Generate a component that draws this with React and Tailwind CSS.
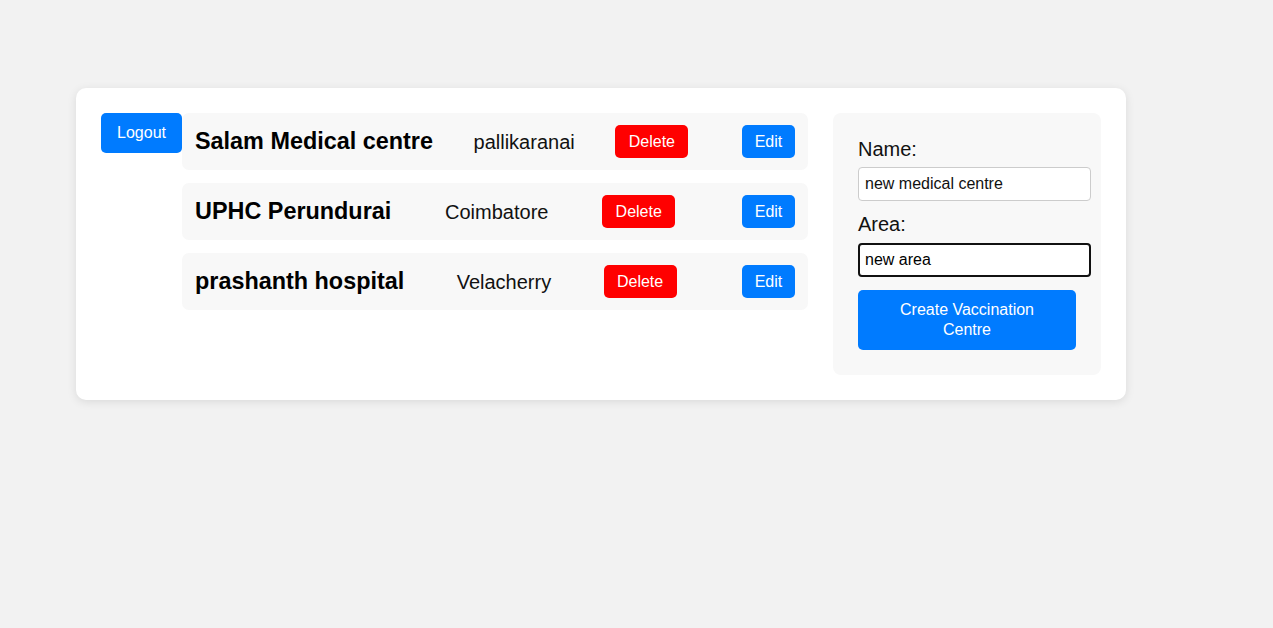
import { useState } from 'react';

const centres = [
  { id: 1, name: 'Salam Medical centre', area: 'pallikaranai' },
  { id: 2, name: 'UPHC Perundurai', area: 'Coimbatore' },
  { id: 3, name: 'prashanth hospital', area: 'Velacherry' },
];

export default function App() {
  const [name, setName] = useState('new medical centre');
  const [area, setArea] = useState('new area');

  return (
    <div className="min-h-screen bg-[#f2f2f2] pt-[88px] pl-[76px] font-['Liberation_Sans',Arial,sans-serif] text-black">
      <div className="w-[1050px] bg-white rounded-[10px] shadow-[0_2px_10px_rgba(0,0,0,0.1)] p-[25px] flex items-start">
        <button className="w-[81px] h-[40px] shrink-0 bg-[#007bff] text-white text-[16px] rounded-[5px]">
          Logout
        </button>

        {/* centre list */}
        <div className="w-[626px] flex flex-col gap-[13px]">
          {centres.map(c => (
            <div key={c.id} className="h-[57px] bg-[#f8f8f8] rounded-[7px] px-[13px] flex items-center justify-between">
              <span className="text-[23.4px] font-bold">{c.name}</span>
              <span className="text-[20px] text-[#111]">{c.area}</span>
              <button className="w-[73px] h-[33px] bg-[#ff0000] text-white text-[16px] rounded-[5px]">Delete</button>
              <button className="ml-[13px] w-[53px] h-[33px] bg-[#007bff] text-white text-[16px] rounded-[5px]">Edit</button>
            </div>
          ))}
        </div>

        {/* form */}
        <div className="ml-[25px] w-[268px] bg-[#f8f8f8] rounded-[8px] p-[25px] flex flex-col">
          <label className="text-[20px] leading-[23px] text-[#111]">Name:</label>
          <input
            value={name}
            onChange={e => setName(e.target.value)}
            className="mt-[6px] w-[233px] h-[34px] px-[6px] bg-white border border-[#ccc] rounded-[4px] text-[16px] text-[#111] outline-none"
          />
          <label className="mt-[12px] text-[20px] leading-[23px] text-[#111]">Area:</label>
          <input
            value={area}
            onChange={e => setArea(e.target.value)}
            className="mt-[7px] w-[233px] h-[34px] px-[5px] bg-white border-2 border-[#111] rounded-[4px] text-[16px] text-black outline-none"
          />
          <button className="mt-[13px] w-[218px] h-[60px] px-[20px] bg-[#007bff] text-white text-[16px] leading-[20px] rounded-[5px]">
            Create Vaccination Centre
          </button>
        </div>
      </div>
    </div>
  );
}
